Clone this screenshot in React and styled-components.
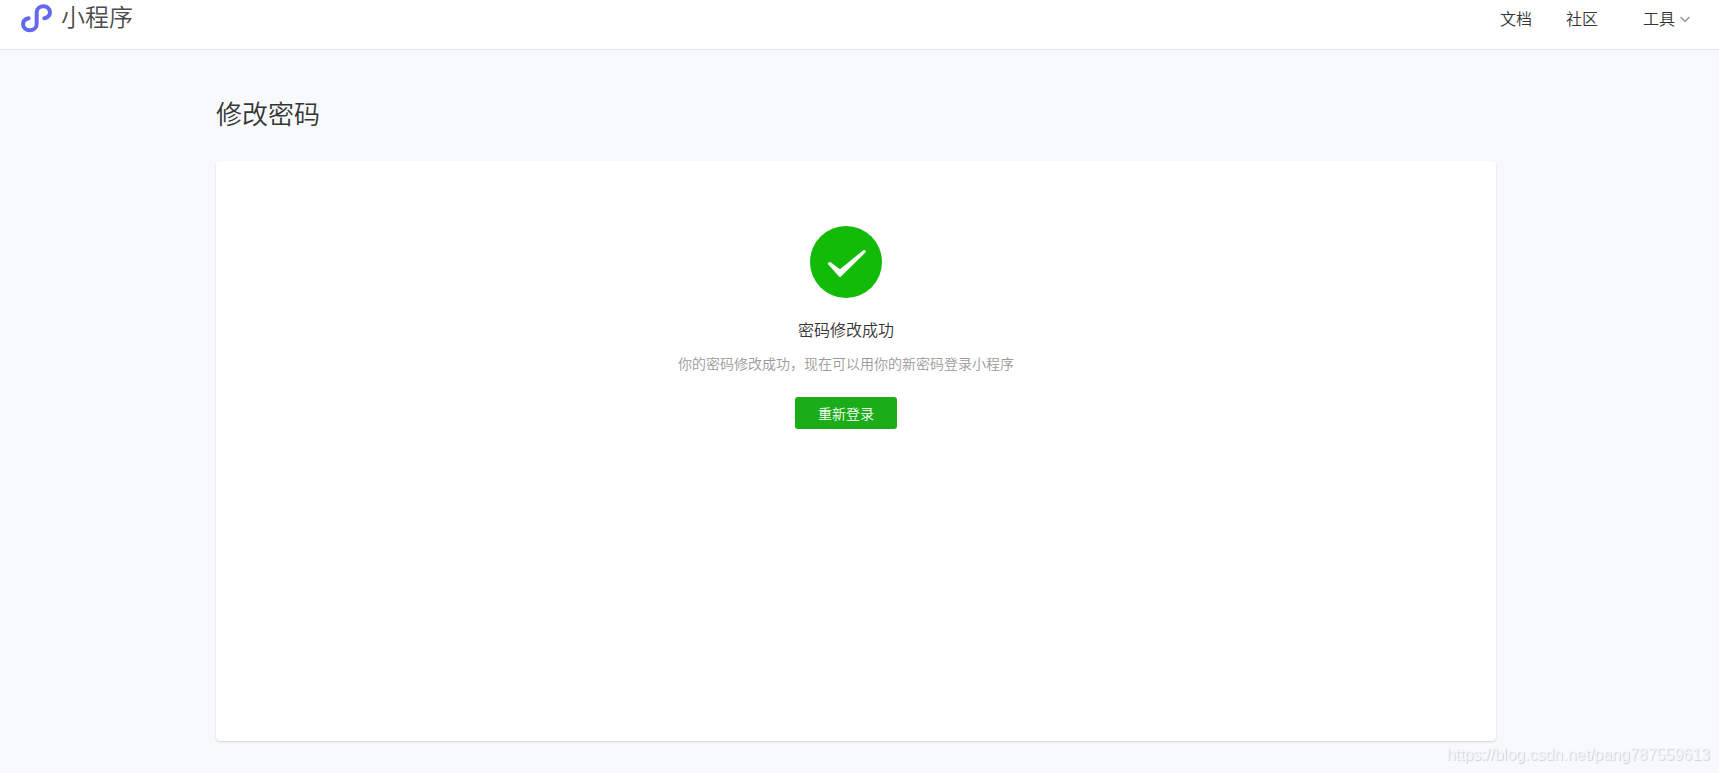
import styled, { createGlobalStyle } from "styled-components";

const GlobalStyle = createGlobalStyle`
  * {
    box-sizing: border-box;
  }
  body {
    margin: 0;
    background-color: #f7f9fb;
    color: #353535;
    font-family: "Liberation Sans", "Noto Sans CJK SC", sans-serif;
    font-size: 14px;
    font-weight: 350;
  }
`;

const links = [
  { label: "文档", href: "#docs" },
  { label: "社区", href: "#community" },
];

const Page = styled.div`
  display: flex;
  flex-direction: column;
  min-height: 100vh;
`;

const Header = styled.header`
  display: flex;
  justify-content: space-between;
  align-items: flex-start;
  height: 50px;
  padding: 0 28px 0 20px;
  background-color: #fff;
  border-bottom: 1px solid #e0e3e5;
`;

const Brand = styled.a`
  display: flex;
  align-items: center;
  gap: 8px;
  height: 36px;
  color: #4c4c4c;
  font-size: 24px;
  line-height: 34px;
  text-decoration: none;
`;

const Nav = styled.nav`
  display: flex;
  align-items: center;
  gap: 34px;
  height: 36px;
  font-size: 16px;
`;

const NavLink = styled.a`
  color: #353535;
  text-decoration: none;
`;

const NavMenu = styled.button`
  display: flex;
  align-items: center;
  gap: 4px;
  margin-left: 11px;
  padding: 0;
  border: none;
  background: none;
  color: #353535;
  font: inherit;
  cursor: pointer;
`;

const Content = styled.div`
  display: flex;
  flex: 1;
  padding-right: 7px;
`;

const Main = styled.main`
  display: flex;
  flex-direction: column;
  width: calc(100% - 16px);
  max-width: 1280px;
  margin: 0 auto;
  padding-bottom: 32px;
`;

const Title = styled.h1`
  margin: 46px 0 27px;
  font-size: 26px;
  font-weight: 350;
  line-height: 38px;
`;

const Card = styled.section`
  display: flex;
  flex: 1;
  flex-direction: column;
  align-items: center;
  padding: 65px 20px 40px 0;
  border-radius: 4px;
  background-color: #fff;
  box-shadow: 0 1px 2px rgba(0, 0, 0, 0.15);
`;

const Message = styled.h2`
  margin: 21px 0 10px;
  font-size: 16px;
  font-weight: 350;
  line-height: 24px;
`;

const Description = styled.p`
  margin: 0 0 22px;
  color: #9a9a9a;
  line-height: 22px;
`;

const PrimaryButton = styled.button`
  height: 32px;
  padding: 0 23px;
  border: none;
  border-radius: 3px;
  background-color: #1aad19;
  color: #fff;
  font: inherit;
  cursor: pointer;
`;

const Watermark = styled.span`
  position: fixed;
  right: 9px;
  bottom: 9px;
  color: #f4f5f6;
  font-size: 16px;
  font-weight: 400;
  line-height: 18px;
  text-shadow: 1px 1px 1px #cfd1d3;
`;

const Logo = () => (
  <svg width="33" height="30" viewBox="60 8 99 90" fill="none" aria-hidden="true">
    <path
      d="M133 54C143 52 150 45 150 36C150 26 141 18 131 18C119 18 110 26 110 36V72C110 82 101 90 89 90C78 90 69 82 69 72C69 62 76 56 86 54"
      stroke="#6467ef"
      strokeWidth="12"
      strokeLinecap="round"
    />
  </svg>
);

const Chevron = () => (
  <svg width="12" height="12" viewBox="0 0 12 12" fill="none" aria-hidden="true">
    <path d="M1.5 5L6 9.5L10.5 5" stroke="#999" strokeWidth="1.5" />
  </svg>
);

const SuccessIcon = () => (
  <svg width="72" height="72" viewBox="0 0 72 72" aria-hidden="true">
    <circle cx="36" cy="36" r="36" fill="#12bb08" />
    <path
      d="M18.3 38.6Q17.4 37.4 18.6 36.6Q19.8 35.6 21 36.5L30 43.2L53 24.4Q54.4 23.4 55.4 24.4Q56.4 25.5 55.3 26.6L31 50.5Q30 51.4 29 50.4Z"
      fill="#fff"
    />
  </svg>
);

const App = () => (
  <Page>
    <GlobalStyle />
    <Header>
      <Brand href="#home">
        <Logo />
        小程序
      </Brand>
      <Nav>
        {links.map(({ label, href }) => (
          <NavLink key={href} href={href}>
            {label}
          </NavLink>
        ))}
        <NavMenu type="button" aria-haspopup="menu">
          工具
          <Chevron />
        </NavMenu>
      </Nav>
    </Header>
    <Content>
      <Main>
        <Title>修改密码</Title>
        <Card>
          <SuccessIcon />
          <Message>密码修改成功</Message>
          <Description>
            你的密码修改成功，现在可以用你的新密码登录小程序
          </Description>
          <PrimaryButton type="button">重新登录</PrimaryButton>
        </Card>
      </Main>
    </Content>
    <Watermark>https://blog.csdn.net/pang787559613</Watermark>
  </Page>
);

export default App;
